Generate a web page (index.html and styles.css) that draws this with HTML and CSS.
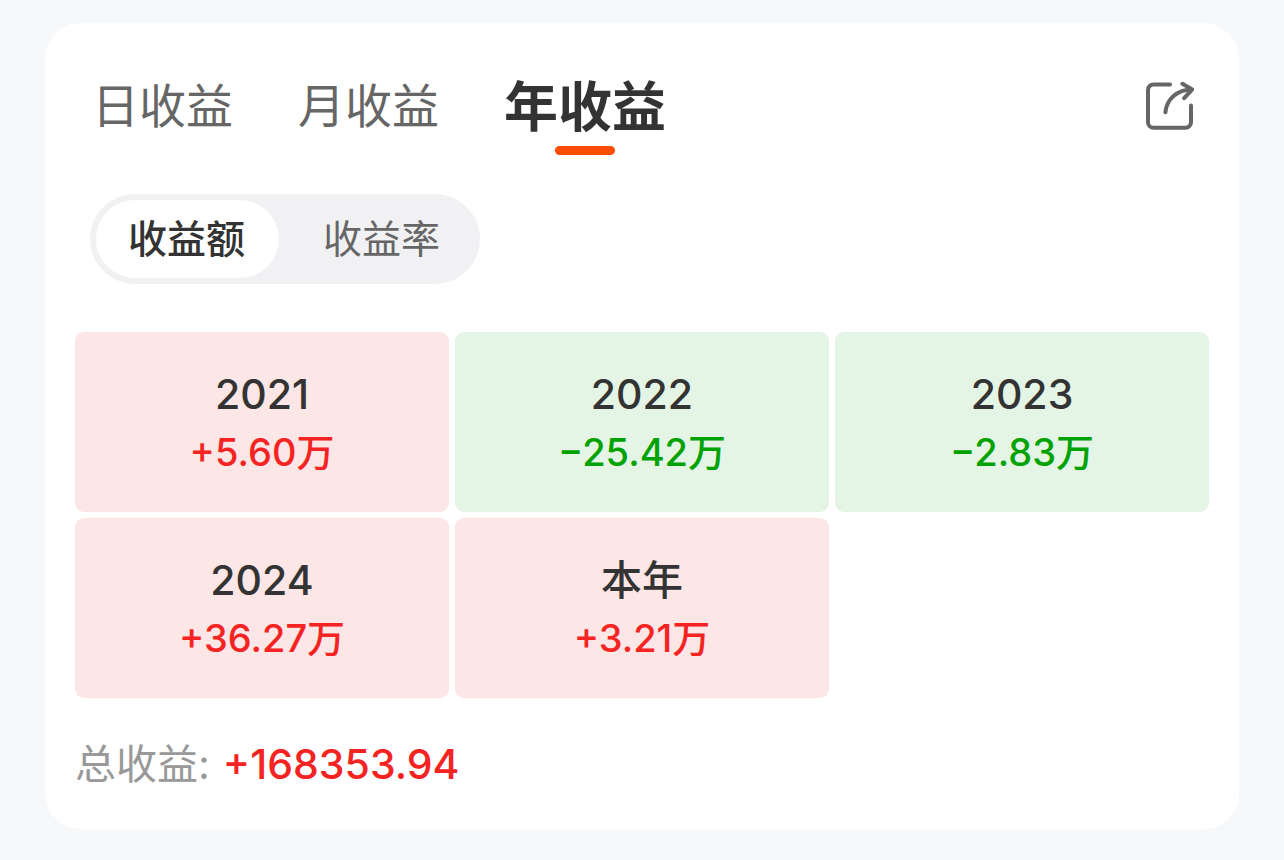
FILE: index.html
```
<!DOCTYPE html>
<html lang="zh-CN">
<head>
  <meta charset="UTF-8" />
  <meta name="viewport" content="width=device-width, initial-scale=1.0"/>
  <title>年收益</title>
  <link rel="stylesheet" href="styles.css">
</head>
<body>

  <main class="card">
    <header class="card-header">
      <nav class="tabs">
        <button class="tab" type="button">日收益</button>
        <button class="tab" type="button">月收益</button>
        <button class="tab active" type="button">年收益</button>
      </nav>
      <button class="share-button" type="button" aria-label="分享">
        <svg class="share-icon" viewBox="0 0 50 50">
          <path d="M26 3.4H9.5a5.5 5.5 0 0 0-5.5 5.5v32.4a5.5 5.5 0 0 0 5.5 5.5h32a5.5 5.5 0 0 0 5.5-5.5V24.5"></path>
          <path d="M21.4 31.3C22.6 18 33 8.6 48 8.4M38.4 2.8l9.8 5.6-8 8.8"></path>
        </svg>
      </button>
    </header>

    <div class="switch">
      <button class="switch-item active" type="button">收益额</button>
      <button class="switch-item" type="button">收益率</button>
    </div>

    <section class="year-grid">
      <div class="year-cell up">
        <div class="year">2021</div>
        <div class="amount">+5.60万</div>
      </div>
      <div class="year-cell down">
        <div class="year">2022</div>
        <div class="amount">−25.42万</div>
      </div>
      <div class="year-cell down">
        <div class="year">2023</div>
        <div class="amount">−2.83万</div>
      </div>
      <div class="year-cell up">
        <div class="year">2024</div>
        <div class="amount">+36.27万</div>
      </div>
      <div class="year-cell up">
        <div class="year">本年</div>
        <div class="amount">+3.21万</div>
      </div>
    </section>

    <footer class="total">
      <span class="total-label">总收益:</span>
      <span class="total-value">+168353.94</span>
    </footer>
  </main>

</body>
</html>
```
FILE: styles.css
```
* {
  margin: 0;
  padding: 0;
  box-sizing: border-box;
}

body {
  font-family: Inter, "Noto Sans CJK SC", sans-serif;
  background: #f7f8fa;
  color: #333;
  padding: 23px 45px 31px;
}

button {
  font-family: inherit;
  color: inherit;
  background: none;
  border: none;
  cursor: pointer;
}

.card {
  background: #fff;
  border-radius: 36px;
  padding: 48px 30px 35px;
}

.card-header {
  display: flex;
  justify-content: space-between;
  align-items: flex-start;
  padding: 0 15px 0 17px;
}

.tabs {
  display: flex;
  align-items: flex-start;
  gap: 65px;
}

.tab {
  position: relative;
  font-size: 47px;
  line-height: 70px;
  color: #666;
}

.tab.active {
  font-size: 54px;
  line-height: 74px;
  font-weight: 700;
  color: #333;
}

/* 选中标签的下划线 */
.tab.active::after {
  content: "";
  position: absolute;
  left: 50%;
  bottom: -10px;
  width: 60px;
  height: 9px;
  margin-left: -30px;
  border-radius: 5px;
  background: #ff4d00;
}

.share-button {
  padding-top: 10px;
}

.share-icon {
  display: block;
  width: 50px;
  height: 50px;
  fill: none;
  stroke: #666;
  stroke-width: 4;
  stroke-linecap: round;
  stroke-linejoin: round;
}

.switch {
  display: inline-flex;
  margin: 49px 15px 48px;
  padding: 6px;
  border-radius: 45px;
  background: #f1f1f4;
  vertical-align: top;
}

.switch-item {
  padding: 0 34px 0 44px;
  border-radius: 39px;
  font-size: 39px;
  line-height: 78px;
  color: #666;
}

.switch-item.active {
  padding: 0 34px 0 32px;
  background: #fff;
  color: #333;
  font-weight: 500;
}

.year-grid {
  display: grid;
  grid-template-columns: repeat(3, 1fr);
  gap: 6px;
}

.year-cell {
  padding: 32px 0;
  border-radius: 9px;
  text-align: center;
  font-weight: 500;
}

.year {
  font-size: 41px;
  line-height: 60px;
}

.amount {
  font-size: 38px;
  line-height: 56px;
}

.year-cell.up {
  background: #fce6e6;
}

.year-cell.down {
  background: #e4f4e5;
}

.up .amount,
.total-value {
  color: #f62323;
}

.down .amount {
  color: #00a200;
}

.total {
  display: flex;
  gap: 13px;
  margin-top: 36px;
  font-size: 41px;
  line-height: 60px;
}

.total-label {
  color: #999;
}

.total-value {
  font-weight: 500;
}
```
